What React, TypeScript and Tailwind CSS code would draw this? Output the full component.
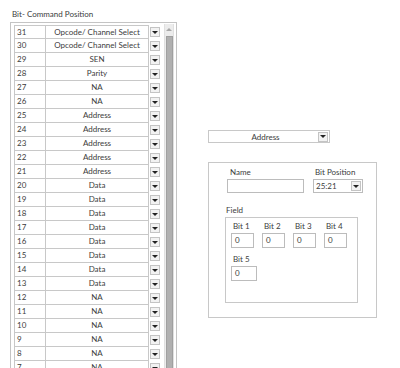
import React from 'react';

const ROWS: [number, string][] = [
  [31, 'Opcode/ Channel Select'],
  [30, 'Opcode/ Channel Select'],
  [29, 'SEN'],
  [28, 'Parity'],
  [27, 'NA'],
  [26, 'NA'],
  [25, 'Address'],
  [24, 'Address'],
  [23, 'Address'],
  [22, 'Address'],
  [21, 'Address'],
  [20, 'Data'],
  [19, 'Data'],
  [18, 'Data'],
  [17, 'Data'],
  [16, 'Data'],
  [15, 'Data'],
  [14, 'Data'],
  [13, 'Data'],
  [12, 'NA'],
  [11, 'NA'],
  [10, 'NA'],
  [9, 'NA'],
  [8, 'NA'],
  [7, 'NA'],
];

const DropButton: React.FC<{ className?: string }> = ({ className = '' }) => (
  <div className={`flex items-center justify-center w-[10px] h-[10px] border border-[#c4c4c4] bg-[#f2f2f2] ${className}`}>
    <div className="w-0 h-0 border-l-[3px] border-r-[3px] border-t-[3px] border-l-transparent border-r-transparent border-t-[#222]" />
  </div>
);

const BitInput: React.FC<{ label: string; wide?: boolean }> = ({ label, wide }) => (
  <div className="flex flex-col">
    <span className="text-[8px] leading-[11px] text-[#3c3c3c] pl-[2px]">{label}</span>
    <div className={`mt-[1px] h-[15px] ${wide ? 'w-[26px]' : 'w-[23px]'} border border-[#bcbcbc] bg-white text-[8px] leading-[13px] pl-[3px] text-[#3c3c3c]`}>
      0
    </div>
  </div>
);

export default function App() {
  return (
    <div className="w-[400px] h-[368px] overflow-hidden bg-white flex text-[#3c3c3c]" style={{ fontFamily: 'Lato, "Open Sans", sans-serif' }}>
      {/* Left: bit list */}
      <div className="w-[177px] pl-[10px] pt-[8px] shrink-0">
        <div className="text-[8px] leading-[12px] pl-[2px]">Bit- Command Position</div>
        <div className="mt-[2px] h-[360px] border border-[#c4c4c4] flex pl-[3px] pt-[2px]">
          <div className="flex flex-col">
            {ROWS.map(([n, v], i) => (
              <div key={n} className="flex items-center h-[14px]">
                <div className={`w-[32px] h-[14px] border-l border-r border-b border-[#c8c8c8] ${i === 0 ? 'border-t' : ''} text-[8px] leading-[13px] pl-[2px]`}>
                  {n}
                </div>
                <div className={`w-[103px] h-[14px] border-r border-b border-[#c8c8c8] ${i === 0 ? 'border-t' : ''} text-[8px] leading-[13px] text-center`}>
                  {v}
                </div>
                <DropButton className="ml-[1px]" />
              </div>
            ))}
          </div>
          {/* scrollbar */}
          <div className="ml-[4px] w-[10px] mt-[-1px] bg-[#ececec] border-l border-r border-[#e0e0e0] flex flex-col items-center">
            <div className="mt-[4px] w-0 h-0 border-l-[3px] border-r-[3px] border-b-[3px] border-l-transparent border-r-transparent border-b-[#a8a8a8]" />
            <div className="mt-[5px] w-[7px] flex-1 bg-[#b0b0b0] border border-[#a0a0a0]" />
          </div>
        </div>
      </div>

      {/* Right: field editor */}
      <div className="pl-[31px] pt-[130px] flex flex-col">
        <div className="w-[122px] h-[13px] border border-[#c8c8c8] flex items-center">
          <div className="flex-1 text-center text-[8px] leading-[12px] pl-[4px]">Address</div>
          <DropButton className="mr-[1px]" />
        </div>
        <div className="mt-[19px] w-[169px] h-[156px] border border-[#c8c8c8] pt-[4px] pl-[18px]">
          <div className="flex">
            <div className="flex flex-col">
              <span className="text-[8px] leading-[11px] pl-[3px]">Name</span>
              <div className="mt-[1px] w-[77px] h-[14px] border border-[#bcbcbc] bg-white" />
            </div>
            <div className="flex flex-col ml-[9px]">
              <span className="text-[8px] leading-[11px] pl-[2px]">Bit Position</span>
              <div className="mt-[1px] w-[50px] h-[14px] border border-[#bcbcbc] flex items-center">
                <span className="flex-1 text-[8px] leading-[12px] pl-[2px]">25:21</span>
                <DropButton className="mr-[1px]" />
              </div>
            </div>
          </div>
          <div className="mt-[12px] text-[8px] leading-[11px] ml-[-1px]">Field</div>
          <div className="mt-[1px] ml-[-2px] w-[133px] h-[86px] border border-[#c8c8c8] pt-[3px] pl-[5px]">
            <div className="flex gap-[8px]">
              <BitInput label="Bit 1" />
              <BitInput label="Bit 2" />
              <BitInput label="Bit 3" />
              <BitInput label="Bit 4" />
            </div>
            <div className="mt-[6px]">
              <BitInput label="Bit 5" wide />
            </div>
          </div>
        </div>
      </div>
    </div>
  );
}
